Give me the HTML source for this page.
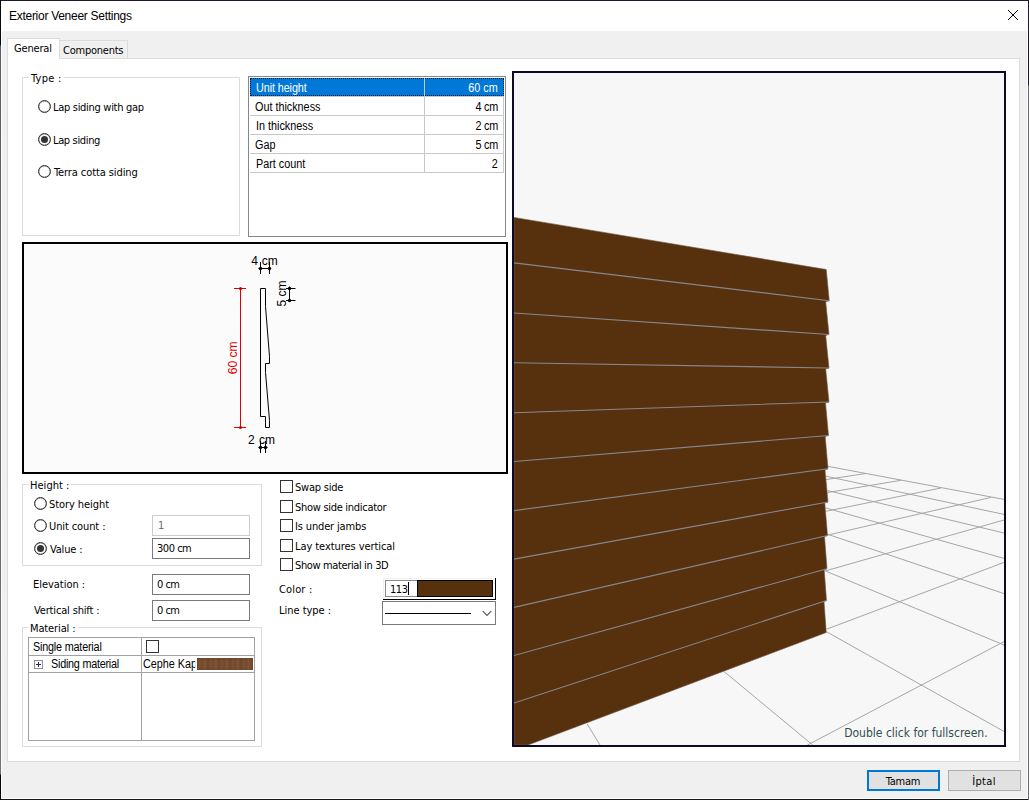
<!DOCTYPE html>
<html lang="en">
<head>
<meta charset="utf-8">
<title>Exterior Veneer Settings</title>
<style>
html,body{margin:0;padding:0;}
body{width:1029px;height:800px;overflow:hidden;position:relative;background:#ffffff;
  font-family:"DejaVu Sans Condensed","Liberation Sans",sans-serif;font-size:11px;color:#000;}
#win{position:absolute;left:0;top:0;width:1029px;height:800px;box-sizing:border-box;
  border:1px solid #1f1a2b;border-bottom-color:#161616;background:#fff;}
#bl{position:absolute;left:0;top:0;width:1px;height:800px;background:linear-gradient(180deg,#0a0a0c 0,#0a0a0c 45px,#5c5c5c 46px,#727272 774px,#050505 775px);}
#br{position:absolute;left:1028px;top:0;width:1px;height:800px;background:linear-gradient(180deg,#1f1a2b 0,#1f1a2b 85px,#6b6970 86px,#6b6970 100%);}
#client{position:absolute;left:2px;top:31px;width:1025px;height:767px;background:#f0f0f0;}
.a{position:absolute;white-space:pre;line-height:14px;}
.t{letter-spacing:-0.3px;}
.ms{font-family:"Liberation Sans",sans-serif;font-size:12px;letter-spacing:0;transform:scaleX(0.9);transform-origin:0 0;}
.msr{transform-origin:100% 0;}
.box{position:absolute;box-sizing:border-box;}
.grp{position:absolute;box-sizing:border-box;border:1px solid #dcdcdc;}
.glab{position:absolute;background:#fff;padding:0 2px;overflow:visible;line-height:14px;white-space:pre;letter-spacing:-0.3px;}
.radio{position:absolute;width:13px;height:13px;box-sizing:border-box;border:1px solid #333;border-radius:50%;background:#fff;box-shadow:inset 0 0 0 0.2px #333;}
.radio.on::after{content:"";position:absolute;left:2px;top:2px;width:7px;height:7px;border-radius:50%;background:#333;}
.chk{position:absolute;width:13px;height:13px;box-sizing:border-box;border:1px solid #333;background:#fff;}
.edit{position:absolute;box-sizing:border-box;border:1px solid #7a7a7a;background:#fff;height:21px;width:98px;}
.btn{position:absolute;box-sizing:border-box;background:#e1e1e1;border:1px solid #adadad;text-align:center;}
</style>
</head>
<body>
<div id="win"></div>
<div id="client"></div>
<div id="bl"></div><div id="br"></div>

<!-- title bar -->
<div class="a" id="title" style="left:9px;top:8px;font-family:'Liberation Sans',sans-serif;font-size:12px;line-height:16px;letter-spacing:-0.28px;">Exterior Veneer Settings</div>
<svg class="a" style="left:1007px;top:9px" width="12" height="12" viewBox="0 0 12 12"><path d="M1 1 L11 11 M11 1 L1 11" stroke="#000" stroke-width="1" fill="none"/></svg>

<!-- tab control -->
<div class="box" id="tabpanel" style="left:7px;top:58px;width:1013px;height:704px;border:1px solid #dcdcdc;background:#fff;"></div>
<div class="box" id="tab2" style="left:59px;top:40px;width:69px;height:19px;border:1px solid #dcdcdc;background:#f0f0f0;"></div>
<div class="box" id="tab1" style="left:7px;top:38px;width:53px;height:21px;border:1px solid #dcdcdc;border-bottom:none;background:#fff;"></div>
<div class="a t" id="tGeneral" style="letter-spacing:-0.17px;left:14px;top:42px;">General</div>
<div class="a t" id="tComponents" style="letter-spacing:-0.24px;left:63px;top:44px;">Components</div>

<!-- Type group -->
<div class="grp" style="left:22px;top:77px;width:218px;height:159px;"></div>
<div class="glab" id="lType" style="letter-spacing:0.28px;left:29px;top:72px;width:31px;">Type :</div>
<div class="radio" style="left:38px;top:100px;"></div>
<div class="a t" id="r1" style="letter-spacing:-0.3px;left:53px;top:101px;">Lap siding with gap</div>
<div class="radio on" style="left:38px;top:133px;"></div>
<div class="a t" id="r2" style="letter-spacing:-0.35px;left:53px;top:134px;">Lap siding</div>
<div class="radio" style="left:38px;top:165px;"></div>
<div class="a t" id="r3" style="letter-spacing:-0.09px;left:54px;top:166px;">Terra cotta siding</div>

<!-- property grid -->
<div class="box" style="left:248px;top:76px;width:258px;height:161px;border:1px solid #828790;background:#fff;"></div>
<div class="box" style="left:250px;top:78px;width:254px;height:18px;background:#0078d7;"></div>
<div class="box" style="left:250px;top:78px;width:254px;height:18px;border:1px dotted #0a1a2c;"></div>
<div class="box" style="left:424px;top:78px;width:1px;height:95px;background:#c8c8c8;"></div>
<div class="box" style="left:250px;top:96px;width:254px;height:1px;background:#c8c8c8;"></div>
<div class="box" style="left:250px;top:115px;width:254px;height:1px;background:#c8c8c8;"></div>
<div class="box" style="left:250px;top:134px;width:254px;height:1px;background:#c8c8c8;"></div>
<div class="box" style="left:250px;top:153px;width:254px;height:1px;background:#c8c8c8;"></div>
<div class="box" style="left:250px;top:172px;width:254px;height:1px;background:#c8c8c8;"></div>
<div class="box" style="left:503px;top:97px;width:1px;height:76px;background:#c8c8c8;"></div>
<div class="a ms" id="g1" style="letter-spacing:-0.1px;left:255.5px;top:81px;color:#fff;">Unit height</div>
<div class="a ms" id="g2" style="left:254.5px;top:100px;">Out thickness</div>
<div class="a ms" id="g3" style="left:255.5px;top:119px;">In thickness</div>
<div class="a ms" id="g4" style="left:255px;top:138px;">Gap</div>
<div class="a ms" id="g5" style="left:255.5px;top:157px;">Part count</div>
<div class="a ms msr" id="v1" style="right:531.7px;top:81px;color:#fff;">60 cm</div>
<div class="a ms msr" id="v2" style="letter-spacing:-0.25px;right:530.7px;top:100px;">4 cm</div>
<div class="a ms msr" id="v3" style="letter-spacing:-0.25px;right:530.7px;top:119px;">2 cm</div>
<div class="a ms msr" id="v4" style="letter-spacing:-0.25px;right:530.7px;top:138px;">5 cm</div>
<div class="a ms msr" id="v5" style="right:531.7px;top:157px;">2</div>

<!-- section preview -->
<div class="box" style="left:22px;top:242px;width:486px;height:232px;border:2px solid #000;background:#fbfbfb;"></div>
<svg class="a" style="left:24px;top:244px" width="482" height="228" viewBox="24 244 482 228" font-family="'Liberation Sans',sans-serif" font-size="12">
  <g fill="none" stroke="#000" stroke-width="1">
    <path d="M260.5 288.5 H265.5 V306.5 L269.5 356.5 V363.5 H265.5 V372.5 L269.5 420.5 V427.5 H265.5 V416.5 H260.5 Z"/>
    <path d="M258.5 268.5 H271 M260.5 262 V274 M269.5 262 V274"/>
    <path d="M258.5 447.5 H267.5 M260.5 441 V453 M265.5 441 V453"/>
    <path d="M289.5 286.5 V302 M286 288.5 H295.5 M286 300.5 H295.5"/>
  </g>
  <g fill="#000"><circle cx="260.5" cy="268.5" r="1.7"/><circle cx="269.5" cy="268.5" r="1.7"/>
    <circle cx="260.5" cy="447.5" r="1.7"/><circle cx="265.5" cy="447.5" r="1.7"/>
    <circle cx="289.5" cy="288.5" r="1.7"/><circle cx="289.5" cy="300.5" r="1.7"/></g>
  <g fill="none" stroke="#e00000" stroke-width="1">
    <path d="M240.5 288.5 V427.5 M234 288.5 H246 M234 427.5 H246"/>
  </g>
  <g fill="#c00000"><circle cx="240.5" cy="288.5" r="1.5"/><circle cx="240.5" cy="427.5" r="1.5"/></g>
  <text x="264.4" y="265" text-anchor="middle" word-spacing="0.5">4 cm</text>
  <text x="261.4" y="444" text-anchor="middle" word-spacing="1">2 cm</text>
  <text transform="translate(286 293.5) rotate(-90)" text-anchor="middle">5 cm</text>
  <text transform="translate(237 357.8) rotate(-90)" text-anchor="middle" fill="#e00000">60 cm</text>
</svg>

<!-- Height group -->
<div class="grp" style="left:22px;top:484px;width:240px;height:82px;"></div>
<div class="glab" id="lHeight" style="letter-spacing:0.03px;left:29px;top:479px;width:39px;padding-left:1px;">Height :</div>
<div class="radio" style="left:34px;top:497px;"></div>
<div class="a t" id="h1" style="letter-spacing:-0.07px;left:49px;top:498px;">Story height</div>
<div class="radio" style="left:34px;top:519px;"></div>
<div class="a t" id="h2" style="letter-spacing:-0.11px;left:49px;top:520px;">Unit count :</div>
<div class="radio on" style="left:34px;top:542px;"></div>
<div class="a t" id="h3" style="letter-spacing:-0.18px;left:50px;top:543px;">Value :</div>
<div class="edit" style="left:152px;top:515px;border-color:#cccccc;"></div>
<div class="a t" id="e1" style="letter-spacing:-0.3px;left:158px;top:519px;color:#6d6d6d;">1</div>
<div class="edit" style="left:152px;top:538px;"></div>
<div class="a t" id="e2" style="word-spacing:0px;letter-spacing:-0.47px;left:157px;top:542px;">300 cm</div>
<div class="a t" id="lElev" style="letter-spacing:-0.03px;left:33px;top:578px;">Elevation :</div>
<div class="edit" style="left:152px;top:574px;"></div>
<div class="a t" id="e3" style="word-spacing:0.2px;letter-spacing:-0.59px;left:157px;top:578px;">0 cm</div>
<div class="a t" id="lVert" style="letter-spacing:-0.16px;left:34px;top:604px;">Vertical shift :</div>
<div class="edit" style="left:152px;top:600px;"></div>
<div class="a t" id="e4" style="word-spacing:0.2px;letter-spacing:-0.59px;left:157px;top:604px;">0 cm</div>

<!-- check boxes -->
<div class="chk" style="left:280px;top:480px;"></div>
<div class="a t" id="c1" style="letter-spacing:-0.23px;left:295px;top:481px;">Swap side</div>
<div class="chk" style="left:280px;top:500px;"></div>
<div class="a t" id="c2" style="letter-spacing:-0.29px;left:295px;top:501px;">Show side indicator</div>
<div class="chk" style="left:280px;top:519px;"></div>
<div class="a t" id="c3" style="letter-spacing:-0.15px;left:295px;top:520px;">Is under jambs</div>
<div class="chk" style="left:280px;top:539px;"></div>
<div class="a t" id="c4" style="letter-spacing:-0.07px;left:295px;top:540px;">Lay textures vertical</div>
<div class="chk" style="left:280px;top:558px;"></div>
<div class="a t" id="c5" style="letter-spacing:-0.37px;left:295px;top:559px;">Show material in 3D</div>

<!-- colour + line type -->
<div class="a t" id="lColor" style="letter-spacing:0.15px;left:279px;top:583px;">Color :</div>
<div class="box" style="left:383px;top:578px;width:113px;height:22px;background:#f0f0f0;border-right:1px solid #000;border-bottom:1px solid #000;"></div>
<div class="box" style="left:384px;top:579px;width:111px;height:20px;background:#fff;"></div>
<div class="box" style="left:385px;top:580px;width:32px;height:17px;background:#fff;border:1px solid #8a8a8a;border-right:none;"></div>
<div class="box" style="left:417px;top:580px;width:76px;height:17px;background:#57300e;border:1px solid #000;"></div>
<div class="a t" id="e5" style="letter-spacing:-0.42px;left:390px;top:583px;">113</div>
<div class="box" style="left:408px;top:582px;width:1px;height:13px;background:#000;"></div>
<div class="a t" id="lLine" style="letter-spacing:-0.02px;left:279px;top:604px;">Line type :</div>
<div class="box" style="left:382px;top:601px;width:114px;height:24px;background:#fff;border:1px solid #7a7a7a;"></div>
<div class="box" style="left:385px;top:613px;width:86px;height:1px;background:#000;"></div>
<svg class="a" style="left:481px;top:609px" width="12" height="8" viewBox="0 0 12 8"><path d="M1.8 2.2 L6 6.4 L10.2 2.2" stroke="#555" stroke-width="1.1" fill="none"/></svg>

<!-- Material group -->
<div class="grp" style="left:22px;top:627px;width:240px;height:120px;"></div>
<div class="glab" id="lMat" style="letter-spacing:-0.12px;left:28px;top:622px;width:46px;">Material :</div>
<div class="box" style="left:28px;top:637px;width:227px;height:104px;background:#fff;border:1px solid #a0a0a6;"></div>
<div class="box" style="left:29px;top:655px;width:225px;height:1px;background:#a0a0a6;"></div>
<div class="box" style="left:29px;top:672px;width:225px;height:1px;background:#a0a0a6;"></div>
<div class="box" style="left:141px;top:638px;width:1px;height:102px;background:#a0a0a6;"></div>
<div class="a ms" id="m1" style="letter-spacing:-0.21px;left:33px;top:640px;">Single material</div>
<svg class="a" style="left:34px;top:660px" width="9" height="9" viewBox="0 0 9 9"><rect x="0.5" y="0.5" width="8" height="8" fill="#fff" stroke="#919191"/><path d="M2 4.5 H7 M4.5 2 V7" stroke="#1c2a6b" stroke-width="1"/></svg>
<div class="a ms" id="m2" style="letter-spacing:-0.26px;left:50.6px;top:657px;">Siding material</div>
<div class="chk" style="left:146px;top:640px;"></div>
<div class="a ms" id="m3" style="left:143.4px;top:657px;width:57.6px;overflow:hidden;">Cephe Kaplama</div>
<div class="box" id="wood" style="left:197px;top:658px;width:56px;height:12px;background:#774b2c;background-image:linear-gradient(180deg,rgba(0,0,0,0.10),rgba(0,0,0,0) 25%,rgba(0,0,0,0) 80%,rgba(0,0,0,0.08)),repeating-linear-gradient(90deg,rgba(0,0,0,0.07) 0,rgba(255,255,255,0.04) 3px,rgba(0,0,0,0.02) 5px,rgba(255,255,255,0.05) 8px,rgba(0,0,0,0.07) 11px);"></div>

<!-- buttons -->
<div class="btn" style="left:867px;top:770px;width:73px;height:21px;border:2px solid #0078d7;"></div>
<div class="a t" id="bOk" style="letter-spacing:-0.21px;left:866px;top:775px;width:74px;text-align:center;">Tamam</div>
<div class="btn" style="left:948px;top:770px;width:73px;height:21px;"></div>
<div class="a t" id="bCancel" style="letter-spacing:0.35px;left:947px;top:775px;width:74px;text-align:center;">İptal</div>

<!-- 3D view -->
<div class="box" style="left:512px;top:71px;width:494px;height:676px;border:2px solid #0c0a26;background:#f7f7f7;"></div>
<svg class="a" style="left:514px;top:73px" width="490" height="672" viewBox="514 73 490 672">
  <path d="M827.5 466.25 L1004 499.4 M826 476.25 L1004 514.4 M827.5 490.6 L1004 533 M826 508 L1004 558.4 M828 534.4 L1004 593.6 M825.5 571 L1004 645 M827 632 L1004 731.5 M724 671.5 L812.7 745 M587 723.7 L600 745 M826 479.6 L865.6 473.5 M827.5 492.5 L901.25 480.25 M826 511.25 L941 488 M828 535 L991 497.4 M825 571 L1004 520 M827 629 L1004 562.4 M807.5 745 L1004 641.6" stroke="#a3a8a3" stroke-width="1" fill="none"/>
  <polygon fill="#57300e" stroke="#6b5a4c" stroke-width="0.6" points="514,217.4 826.25,269.5 829.25,300.75 825.7,301.75 829,334.5 825.7,335.5 829,368 825.7,369 829,402 825.5,403 828.5,435.5 825.2,436.5 828,468.75 825,469.75 828,502 824.8,503 827.5,535.5 824.5,536.5 827,568.75 824.2,569.75 826.5,600.5 824,601.5 826.25,632.5 528,745 514,745"/>
  <path d="M514 262.8 L829.25 300.75 M514 313 L829 334.5 M514 362.7 L829 368 M514 412.8 L829 402 M514 461.5 L828.5 435.5 M514 510.6 L828 468.75 M514 559.2 L828 502 M514 607.4 L827.5 535.5 M514 655.5 L827 568.75 M514 703 L826.5 600.5" stroke="#86878d" stroke-width="1.15" fill="none"/>
  <text x="844.2" y="737" font-family="'DejaVu Sans Condensed','Liberation Sans',sans-serif" font-size="12" fill="#2f4f4f" id="dbl">Double click for fullscreen.</text>
</svg>

<!--SECTIONS-->
</body>
</html>
